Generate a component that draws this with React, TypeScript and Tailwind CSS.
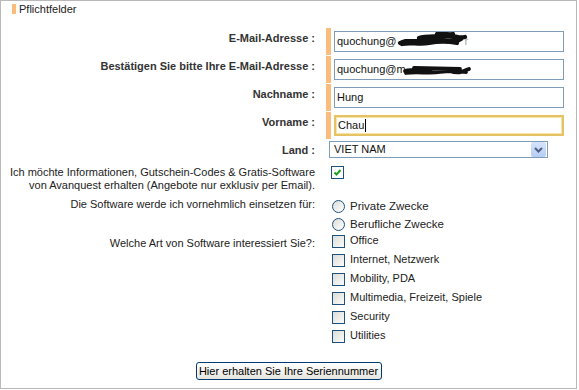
const font = { fontFamily: '"Liberation Sans", Arial, sans-serif' };

const textRows = [
  { id: "email", label: "E-Mail-Adresse :", value: "quochung@", scribble: "a" },
  { id: "email2", label: "Bestätigen Sie bitte Ihre E-Mail-Adresse :", value: "quochung@m", scribble: "b" },
  { id: "last", label: "Nachname :", value: "Hung" },
  { id: "first", label: "Vorname :", value: "Chau", focused: true },
];

const interests = [
  "Office",
  "Internet, Netzwerk",
  "Mobility, PDA",
  "Multimedia, Freizeit, Spiele",
  "Security",
  "Utilities",
];

function Scribble({ kind }: { kind?: string }) {
  if (kind === "a") {
    return (
      <span className="inline-flex items-center">
        <svg width="74" height="17" viewBox="0 0 74 17" className="-mt-[2px]">
          <path
            d="M3 11 C10 7 16 12 24 9 S38 5 46 8 S58 11 64 7 M5 12 C14 10 22 13 32 11 S50 9 60 11 M22 6 C30 3 40 5 50 4 S60 7 68 5 M40 2 C46 1 52 3 56 2 M8 9 L60 8"
            stroke="#111"
            strokeWidth="4.2"
            fill="none"
            strokeLinecap="round"
          />
        </svg>
        <span className="-ml-[6px] text-[#9aa]">r</span>
      </span>
    );
  }
  return (
    <svg width="70" height="14" viewBox="0 0 70 14" className="-ml-[4px]">
      <path
        d="M3 8 C10 5 18 10 26 7 S40 5 48 8 S60 9 67 6 M4 10 C16 8 26 11 38 9 S56 8 64 9 M12 5 L58 6"
        stroke="#111"
        strokeWidth="3.8"
        fill="none"
        strokeLinecap="round"
      />
    </svg>
  );
}

function Box({ checked }: { checked?: boolean }) {
  return (
    <span
      className={`flex h-[13px] w-[13px] shrink-0 items-center justify-center border border-[#1c5180] ${
        checked ? "bg-white" : "bg-gradient-to-br from-[#dcdcd7] to-[#fbfbf9]"
      }`}
    >
      {checked ? (
        <svg width="9" height="9" viewBox="0 0 9 9">
          <path d="M1.5 4.5 L3.5 6.5 L7.5 2" stroke="#21a121" strokeWidth="2" fill="none" />
        </svg>
      ) : null}
    </span>
  );
}

function Radio() {
  return (
    <span className="h-[13px] w-[13px] shrink-0 rounded-full border border-[#1c5180] bg-gradient-to-br from-[#dcdcd7] to-white" />
  );
}

export default function App() {
  return (
    <div
      className="relative h-[390px] w-[579px] bg-white text-[11px] leading-[13px] text-[#222]"
      style={font}
    >
      <div className="h-[389px] w-[577px] border border-[#b9b9b9]">
        <div className="flex h-[27px] items-start gap-[3px] pl-[11px] pt-[2px]">
          <span className="mt-[1px] h-[10px] w-[4px] bg-[#fbbd7d]" />
          <span className="text-[#222]">Pflichtfelder</span>
        </div>

        <div className="flex flex-col gap-px">
          {textRows.map((row) => (
            <div key={row.id} className="flex h-[27px]">
              <div className="w-[314px] pt-[4px] text-right font-bold text-[#333]">
                {row.label}
              </div>
              <div className="ml-[11px] flex h-full">
                <span className="h-full w-[5px] bg-[#fbbd7d]" />
                <div className="ml-[3px] mt-[3px] h-[21px]">
                  <div
                    className={`flex h-[21px] w-[230px] items-center pl-[2px] text-[#111] ${
                      row.focused
                        ? "border-2 border-[#e5c365] shadow-[inset_0_0_0_1px_#f7e4a6]"
                        : "border border-[#7f9db9]"
                    }`}
                  >
                    <span>{row.value}</span>
                    {row.focused ? <span className="ml-px h-[13px] w-px bg-black" /> : null}
                    {row.scribble ? <Scribble kind={row.scribble} /> : null}
                  </div>
                </div>
              </div>
            </div>
          ))}
        </div>

        <div className="mt-[1px] flex h-[25px]">
          <div className="w-[314px] pt-[4px] text-right font-bold text-[#333]">Land :</div>
          <div className="ml-[14px] mt-[1px] flex h-[17px] w-[219px] items-center justify-between border border-[#7f9db9] pl-[4px] pr-px">
            <span className="text-[#111]">VIET NAM</span>
            <span className="flex h-[15px] w-[15px] items-center justify-center rounded-[2px] bg-gradient-to-b from-[#d7e3fb] to-[#b6cdf6]">
              <svg width="9" height="6" viewBox="0 0 9 6">
                <path d="M1 1 L4.5 4.5 L8 1" stroke="#4d6185" strokeWidth="2" fill="none" />
              </svg>
            </span>
          </div>
        </div>

        <div className="flex h-[30px]">
          <div className="w-[314px] pt-[1px] text-right leading-[13px]">
            Ich möchte Informationen, Gutschein-Codes &amp; Gratis-Software
            <br />
            von Avanquest erhalten (Angebote nur exklusiv per Email).
          </div>
          <div className="ml-[16px] pt-[1px]">
            <Box checked />
          </div>
        </div>

        <div className="flex h-[38px]">
          <div className="w-[314px] pt-[3px] text-right">
            Die Software werde ich vornehmlich einsetzen für:
          </div>
          <div className="ml-[17px] flex flex-col gap-[5px] pt-[5px]">
            <label className="flex items-center gap-[5px]">
              <Radio />
              <span className="text-[11.5px]">Private Zwecke</span>
            </label>
            <label className="flex items-center gap-[5px]">
              <Radio />
              <span className="text-[11.5px]">Berufliche Zwecke</span>
            </label>
          </div>
        </div>

        <div className="flex">
          <div className="w-[314px] pt-[4px] text-right">
            Welche Art von Software interessiert Sie?:
          </div>
          <div className="ml-[17px] flex flex-col gap-[6px] pt-[2px]">
            {interests.map((item) => (
              <label key={item} className="flex items-center gap-[5px]">
                <Box />
                <span className="-mt-[2px]">{item}</span>
              </label>
            ))}
          </div>
        </div>

        <div className="mt-[19px] flex justify-center">
          <button className="h-[18px] w-[186px] rounded-[3px] border border-[#003c74] bg-gradient-to-b from-white to-[#e6e5df] text-[11px] leading-none text-black">
            Hier erhalten Sie Ihre Seriennummer
          </button>
        </div>
      </div>
    </div>
  );
}
